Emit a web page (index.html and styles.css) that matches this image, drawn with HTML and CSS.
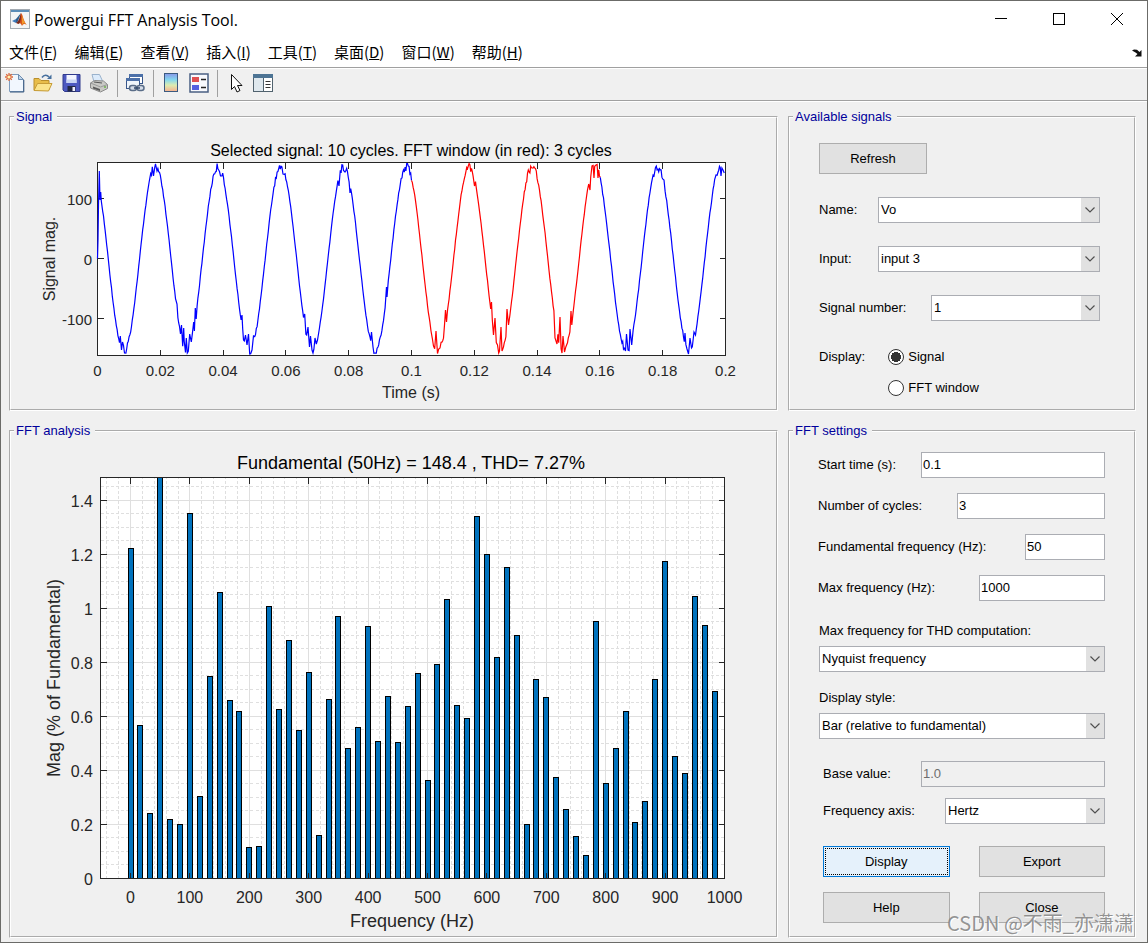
FILE: index.html
```html
<!DOCTYPE html>
<html lang="zh-CN">
<head>
<meta charset="utf-8">
<title>Powergui FFT Analysis Tool.</title>
<link rel="stylesheet" href="styles.css">
</head>
<body>
<div class="window">
  <header class="titlebar">
    <svg class="app-icon" width="20" height="20" viewBox="0 0 20 20" aria-hidden="true">
      <rect x=".5" y=".5" width="19" height="19" fill="#f4f5f6" stroke="#a3aab1"/>
      <path d="M1 1h18v2H1z" fill="#5b8db8"/>
      <path d="M2 12l4-2 2 2-2 2z" fill="#3e79b8"/>
      <path d="M6 10l5-6-3 8-2 2z" fill="#2c5d8f"/>
      <path d="M11 4c2 1 2 8 6 12-3-2-4-1-5 1-1-3-3-4-5-2 2-2 3-8 4-11z" fill="#d9541a"/>
      <path d="M11 4c-1 4-2 8-5 10l3 1c2-3 2-6 2-11z" fill="#7a2a1c"/>
      <path d="M12 6c1 4 2 7 4 9-2-1-3-1-4 1z" fill="#f09b2c"/>
    </svg>
    <h1 class="title">Powergui FFT Analysis Tool.</h1>
    <div class="window-buttons">
      <button type="button" class="window-button" aria-label="Minimize"><svg width="12" height="12" viewBox="0 0 12 12"><path d="M0 5.500h12" stroke="#000"/></svg></button>
      <button type="button" class="window-button" aria-label="Maximize"><svg width="12" height="12" viewBox="0 0 12 12"><rect x=".5" y=".5" width="11" height="11" fill="none" stroke="#000"/></svg></button>
      <button type="button" class="window-button" aria-label="Close window"><svg width="12" height="12" viewBox="0 0 12 12"><path d="M0 0l12 12M12 0L0 12" stroke="#000"/></svg></button>
    </div>
  </header>

  <nav class="menubar">
    <button type="button" class="menu">文件(<u>F</u>)</button>
    <button type="button" class="menu">编辑(<u>E</u>)</button>
    <button type="button" class="menu">查看(<u>V</u>)</button>
    <button type="button" class="menu">插入(<u>I</u>)</button>
    <button type="button" class="menu">工具(<u>T</u>)</button>
    <button type="button" class="menu">桌面(<u>D</u>)</button>
    <button type="button" class="menu">窗口(<u>W</u>)</button>
    <button type="button" class="menu">帮助(<u>H</u>)</button>
    <button type="button" class="dock" aria-label="Dock figure"><svg width="10" height="8" viewBox="0 0 10 8"><path d="M0 1.500L2 .5l3 .3 2.500 2.200L9.500 1v6.500H3L5.500 5 3.500 3.500z" fill="#111"/></svg></button>
  </nav>

  <div class="toolbar">
    <button type="button" class="tool" aria-label="New figure"><svg width="20" height="20" viewBox="0 0 20 20"><path d="M4.500 1.500h9l5 5v12h-14z" fill="#f1f7fe" stroke="#7f9cbd"/><path d="M13.500 1.500v5h5z" fill="#c3d6ea" stroke="#6d8db1"/><path d="M18.800 7v12H5" fill="none" stroke="#36567c"/><path d="M4 0v8M0 4h8M1.200 1.200l5.600 5.600M6.800 1.200L1.200 6.800" stroke="#dd6a3c" stroke-width="1.300"/><circle cx="4" cy="4" r="1.600" fill="#fff2b0"/></svg></button>
    <button type="button" class="tool" aria-label="Open file"><svg width="20" height="20" viewBox="0 0 20 20"><path d="M1 17V5.500h5l2 2h8V17z" fill="#e8bd49" stroke="#b98e2c"/><path d="M1 17.500l3.500-7h14.500l-3.500 7.500z" fill="#fbe48b" stroke="#c79c36"/><path d="M9 4.500c2-3 5-3 7-.5" fill="none" stroke="#47709e" stroke-width="1.500"/><path d="M18.500 1.500v4.500h-4.500z" fill="#47709e"/></svg></button>
    <button type="button" class="tool" aria-label="Save figure"><svg width="20" height="20" viewBox="0 0 20 20"><path d="M2 1.500h17v17H3.500L2 17z" fill="#4c58c0" stroke="#303a8c"/><path d="M5.500 2h10v8h-10z" fill="#f3f5ff"/><path d="M5.500 6.500h10V10h-10z" fill="#c9d5f3"/><path d="M6.500 13h8v5.500h-8z" fill="#222845"/><path d="M11.500 14h2.500v4h-2.500z" fill="#eef"/></svg></button>
    <button type="button" class="tool" aria-label="Print figure"><svg width="20" height="20" viewBox="0 0 20 20"><path d="M5 9L3 1.500h7.500L14 9z" fill="#dcebfb" stroke="#9ab2cc"/><path d="M1.500 10l4-2.500 9 .5 4 3.500v4l-7 3.500-10-4z" fill="#c9c9c5" stroke="#8a8a8a"/><path d="M1.500 10l10 4 7-2.500" fill="none" stroke="#999"/><path d="M4 13.500l7 2.500v2l-7-2.500z" fill="#5b5b5b"/><path d="M5 9l8 1" stroke="#555"/><circle cx="16" cy="14" r="1" fill="#6ab04a"/></svg></button>
    <span class="separator"></span>
    <button type="button" class="tool" aria-label="Link plot"><svg width="20" height="20" viewBox="0 0 20 20"><rect x="4.500" y="1.500" width="13" height="9" fill="#fff" stroke="#38568a"/><path d="M4 1h14v3H4z" fill="#4c70a8"/><rect x="1.500" y="5.500" width="13" height="10" fill="#eff5fb" stroke="#38568a"/><path d="M1 5h14v3H1z" fill="#4c70a8"/><rect x="4.500" y="12.500" width="7" height="5" rx="2.500" fill="#d4dce8" stroke="#5a6d88" stroke-width="1.500"/><rect x="12" y="12.500" width="7" height="5" rx="2.500" fill="#d4dce8" stroke="#5a6d88" stroke-width="1.500"/><path d="M9 15h6" stroke="#2f4668" stroke-width="1.500"/></svg></button>
    <span class="separator"></span>
    <button type="button" class="tool" aria-label="Insert colorbar"><svg width="20" height="20" viewBox="0 0 20 20"><defs><linearGradient id="bar-colors" x2="0" y2="1"><stop offset="0" stop-color="#8797e8"/><stop offset=".35" stop-color="#84d8ef"/><stop offset=".65" stop-color="#ddecb0"/><stop offset="1" stop-color="#f6b08f"/></linearGradient></defs><rect x="3.500" y=".5" width="13" height="18" fill="url(#bar-colors)" stroke="#3c5a80"/></svg></button>
    <button type="button" class="tool" aria-label="Insert legend"><svg width="20" height="20" viewBox="0 0 20 20"><rect x="1" y="1" width="18" height="18" fill="#f8f9fd" stroke="#4a5f82" stroke-width="1.500"/><path d="M3 4h7v5H3z" fill="#e04f50"/><path d="M3 12h7v5H3z" fill="#5560e0"/><path d="M12 6.500h5M12 14.500h5" stroke="#222" stroke-width="1.300"/></svg></button>
    <span class="separator"></span>
    <button type="button" class="tool" aria-label="Edit plot"><svg width="20" height="20" viewBox="0 0 20 20"><path d="M6.500 1.500v15l3-3 2.500 5.500 3-1.500-2.500-5h4.500z" fill="#fff" stroke="#111"/></svg></button>
    <button type="button" class="tool" aria-label="Open property inspector"><svg width="20" height="20" viewBox="0 0 20 20"><rect x=".5" y="1.500" width="19" height="17" fill="#dfe8ee" stroke="#51626e"/><path d="M0 1h20v4H0z" fill="#4d7494"/><path d="M10.500 5v13" stroke="#51626e"/><path d="M11 5h8v13h-8z" fill="#fff"/><path d="M12.500 8.500h5M12.500 11.500h5M12.500 14.500h5" stroke="#333"/></svg></button>
  </div>

  <main class="panels">
    <fieldset class="panel">
      <legend>Signal</legend>
      <svg class="chart signal-chart" id="signal-chart" viewBox="11 124 765 285" role="img" aria-label="Signal plot"></svg>
    </fieldset>

    <fieldset class="panel">
      <legend>Available signals</legend>
      <div class="form signals-form">
        <button type="button" class="button refresh">Refresh</button>
        <div class="row">
          <label for="name">Name:</label>
          <select id="name" class="control w-222"><option>Vo</option></select>
        </div>
        <div class="row">
          <label for="input">Input:</label>
          <select id="input" class="control w-222"><option>input 3</option></select>
        </div>
        <div class="row">
          <label for="number">Signal number:</label>
          <select id="number" class="control w-169"><option>1</option></select>
        </div>
        <div class="radio-row">
          <span>Display:</span>
          <div class="radios">
            <label class="radio"><input type="radio" name="display" checked>Signal</label>
            <label class="radio"><input type="radio" name="display">FFT window</label>
          </div>
        </div>
      </div>
    </fieldset>

    <fieldset class="panel">
      <legend>FFT analysis</legend>
      <svg class="chart fft-chart" id="fft-chart" viewBox="11 438 765 498" role="img" aria-label="FFT bar chart"></svg>
    </fieldset>

    <fieldset class="panel">
      <legend>FFT settings</legend>
      <div class="form settings-form">
        <div class="row">
          <label for="start">Start time (s):</label>
          <input id="start" type="text" class="control w-184" value="0.1">
        </div>
        <div class="row">
          <label for="cycles">Number of cycles:</label>
          <input id="cycles" type="text" class="control w-148" value="3">
        </div>
        <div class="row">
          <label for="fundamental">Fundamental frequency (Hz):</label>
          <input id="fundamental" type="text" class="control w-80" value="50">
        </div>
        <div class="row">
          <label for="max">Max frequency (Hz):</label>
          <input id="max" type="text" class="control w-126" value="1000">
        </div>
        <div class="stack">
          <label for="thd">Max frequency for THD computation:</label>
          <select id="thd" class="control"><option>Nyquist frequency</option></select>
        </div>
        <div class="stack">
          <label for="style">Display style:</label>
          <select id="style" class="control"><option>Bar (relative to fundamental)</option></select>
        </div>
        <div class="axis-group">
          <div class="row">
            <label for="base">Base value:</label>
            <input id="base" type="text" class="control w-184" value="1.0" disabled>
          </div>
          <div class="row">
            <label for="axis">Frequency axis:</label>
            <select id="axis" class="control w-160"><option>Hertz</option></select>
          </div>
        </div>
        <div class="actions">
          <button type="button" class="button default">Display</button>
          <button type="button" class="button">Export</button>
          <button type="button" class="button">Help</button>
          <button type="button" class="button">Close</button>
        </div>
      </div>
    </fieldset>
  </main>
  <div class="watermark">CSDN @不雨_亦潇潇</div>
</div>
<script src="charts.js"></script>
</body>
</html>
```

FILE: styles.css
```css
* {
  box-sizing: border-box;
}

body {
  margin: 0;
  background: #f0f0f0;
  color: #000;
  font: 13px/16px "Liberation Sans", Arial, sans-serif;
}

button,
input,
select {
  margin: 0;
  font: inherit;
  color: inherit;
}

.window {
  position: relative;
  display: flex;
  flex-direction: column;
  min-height: 100vh;
  border: 1px solid #6b6b68;
}

.titlebar {
  display: flex;
  align-items: center;
  height: 37px;
  padding-left: 9px;
  background: #fff;
}

.app-icon {
  margin-bottom: 2px;
}

.title {
  margin: 0 0 0 4px;
  font: 400 16px/20px "Open Sans", "Noto Sans CJK SC", sans-serif;
}

.window-buttons {
  display: flex;
  align-self: stretch;
  margin-left: auto;
}

.window-button {
  display: grid;
  place-items: center;
  width: 58px;
  padding: 0 2px 2px 0;
  border: 0;
  background: none;
}

.menubar {
  display: flex;
  align-items: center;
  gap: 17px;
  height: 29px;
  padding: 0 5px 0 8px;
  background: #fff;
}

.menu {
  padding: 0 0 2px;
  border: 0;
  background: none;
  font: 15px/22px "Noto Sans CJK SC", sans-serif;
  white-space: nowrap;
}

.dock {
  display: flex;
  margin-left: auto;
  padding: 0;
  border: 0;
  background: none;
}

.toolbar {
  display: flex;
  align-items: center;
  gap: 7px;
  height: 34px;
  padding: 0 0 2px 4px;
  border-top: 1px solid #a0a0a0;
  border-bottom: 1px solid #a0a0a0;
  box-shadow: inset 0 1px #fff, 0 1px #fff;
}

.tool {
  display: flex;
  width: 21px;
  padding: 0;
  border: 0;
  background: none;
}

.separator {
  width: 1px;
  height: 27px;
  background: #a0a0a0;
}

.panels {
  flex: 1;
  display: grid;
  grid-template-columns: 769fr 348fr;
  grid-template-rows: auto 1fr;
  gap: 12px 10px;
  padding: 8px 11px 4px 8px;
}

.panel {
  min-width: 0;
  margin: 0;
  padding: 0;
  border: 2px groove #fff;
}

.panel legend {
  margin-left: 3px;
  padding: 0 5px 0 2px;
  color: #00009c;
  line-height: 15px;
}

.chart {
  display: block;
  width: 100%;
  font-family: "Liberation Sans", Arial, sans-serif;
  fill: #262626;
}

.signal-chart {
  font-size: 15px;
}

.fft-chart {
  font-size: 16px;
}

.signal-chart .label {
  font-size: 16px;
}

.fft-chart .label {
  font-size: 18px;
}

.chart .title-text {
  fill: #000;
}

.plot-area {
  fill: #fff;
}

.frame {
  fill: none;
  stroke: #262626;
  shape-rendering: crispEdges;
}

.major,
.minor {
  stroke: #dfdfdf;
  shape-rendering: crispEdges;
}

.minor {
  stroke-dasharray: 3 2;
}

.bar {
  fill: #0072bd;
  stroke: #000;
  shape-rendering: crispEdges;
}

.wave {
  fill: none;
  stroke: #00f;
  stroke-width: 1.2;
}

.wave.selected {
  stroke: #f00;
}

.form {
  display: flex;
  flex-direction: column;
}

.signals-form {
  gap: 23px;
  padding: 19px 34px 0 29px;
}

.settings-form {
  gap: 15px;
  padding: 14px 29px 13px 28px;
}

.row {
  display: flex;
  align-items: center;
  justify-content: space-between;
}

.stack {
  display: flex;
  flex-direction: column;
  gap: 7px;
  padding: 7px 0 0 1px;
}

.stack + .stack {
  padding-top: 3px;
}

.axis-group {
  display: flex;
  flex-direction: column;
  gap: 11px;
  padding: 7px 0 7px 5px;
}

.control {
  height: 26px;
  padding: 0 2px;
  border: 1px solid #abadb3;
  border-radius: 0;
  background-color: #fff;
}

input.control {
  padding: 0 1px 2px;
}

input.control:disabled {
  background-color: #f0f0f0;
  color: #6d6d6d;
}

select.control {
  appearance: none;
  background-image:
    url("data:image/svg+xml,%3Csvg xmlns='http://www.w3.org/2000/svg' width='10' height='6'%3E%3Cpath d='M.5 .5L5 5L9.500 .5' fill='none' stroke='%23505050' stroke-width='1.200'/%3E%3C/svg%3E"),
    linear-gradient(#e1e1e1, #e1e1e1);
  background-position: right 4px center, right center;
  background-size: 10px 6px, 18px 100%;
  background-repeat: no-repeat;
}

.w-80 { width: 80px; }
.w-126 { width: 126px; }
.w-148 { width: 148px; }
.w-160 { width: 160px; }
.w-169 { width: 169px; }
.w-184 { width: 184px; }
.w-222 { width: 222px; }

.button {
  height: 31px;
  padding: 0;
  border: 1px solid #adadad;
  background: #e1e1e1;
}

.button.refresh {
  width: 108px;
}

.button.default {
  border-color: #0078d7;
  background: #e5f1fb;
  outline: 1px dotted #000;
  outline-offset: -3px;
}

.actions {
  display: grid;
  grid-template-columns: 1fr 1fr;
  gap: 15px 29px;
  padding-left: 5px;
}

.radio-row {
  display: flex;
  gap: 23px;
  padding-top: 5px;
}

.radios {
  display: flex;
  flex-direction: column;
  gap: 15px;
}

.radio {
  display: flex;
  align-items: center;
  gap: 4px;
}

.radio input {
  appearance: none;
  width: 16px;
  height: 16px;
  border: 1px solid #333;
  border-radius: 50%;
  background: #fff;
}

.radio input:checked {
  background: radial-gradient(circle, #333 0 5px, #fff 5px);
}

.watermark {
  position: absolute;
  right: 13px;
  bottom: 5px;
  color: rgba(130, 130, 130, 0.85);
  font: 20px/28px "Noto Sans CJK SC", sans-serif;
  text-shadow: 1px 1px #fff;
  white-space: nowrap;
  pointer-events: none;
}
```

FILE: charts.js
```js
const SVG = "http://www.w3.org/2000/svg";

function add(parent, name, attrs, text) {
  const el = document.createElementNS(SVG, name);
  for (const key in attrs) el.setAttribute(key, attrs[key]);
  if (text !== undefined) el.textContent = text;
  parent.appendChild(el);
  return el;
}

const snap = v => Math.floor(v) + 0.5;

// Axes box with inward ticks on all four sides.
function frame(svg, box, xs, ys, len) {
  let d = `M${box.l} ${box.t}H${box.r}V${box.b}H${box.l}Z`;
  xs.forEach(x => { d += `M${x} ${box.b}v${-len}M${x} ${box.t}v${len}`; });
  ys.forEach(y => { d += `M${box.l} ${y}h${len}M${box.r} ${y}h${-len}`; });
  add(svg, "path", { class: "frame", d });
}

function drawSignal() {
  const svg = document.getElementById("signal-chart");
  const box = { l: 97.5, t: 162.5, r: 725.5, b: 355.5 };
  const xOf = t => box.l + t * 3140;
  add(svg, "rect", { class: "plot-area", x: box.l, y: box.t, width: box.r - box.l, height: box.b - box.t });

  const xs = [];
  for (let i = 0; i <= 10; i++) {
    xs.push(snap(xOf(i * 0.02)));
    add(svg, "text", { x: xOf(i * 0.02), y: 376, "text-anchor": "middle" }, String(i * 2 / 100));
  }
  const ys = [198.5, 258.5, 318.5];
  [100, 0, -100].forEach((v, i) => {
    add(svg, "text", { x: 92, y: ys[i] + 6, "text-anchor": "end" }, v);
  });
  frame(svg, box, xs, ys, 6);

  // Switching spikes, as [x, y] samples.
  const spikes = [
    [98, 240], [98.5, 205], [99.3, 171], [100, 200], [100.7, 192], [101.3, 201],
    [120.3, 336], [121.5, 350], [122.5, 342], [124.5, 353],
    [153.5, 176], [157, 171],
    [177, 304], [178.7, 323], [180.5, 334], [181.5, 325], [183.7, 328], [184.2, 341], [185.5, 352.5], [186.3, 338], [187.3, 353], [189.7, 334], [191.3, 342], [193.7, 322], [194.4, 331], [195.3, 308], [196.2, 319],
    [220.5, 176], [242, 315], [243.5, 340], [245.5, 335], [247, 345], [248.5, 334], [249.7, 354], [252, 350], [253.5, 336],
    [283, 174], [304.7, 314], [306.7, 335], [308, 327], [309.5, 347], [310.5, 336], [312, 350], [313, 353], [315, 338], [317.5, 340], [318.5, 334],
    [339, 186], [345, 172], [350, 193],
    [370, 337], [371.5, 332], [373, 347], [375, 353], [378, 347],
    [386.5, 287], [387, 297], [402, 178],
    [431, 331], [433.5, 346], [436, 331], [437.5, 353.5], [440, 348],
    [444.5, 325], [445.5, 310], [446.5, 322], [474.5, 186],
    [491.5, 302], [493.5, 335], [495, 318], [497.5, 345], [499.5, 351], [501, 327], [502, 351],
    [507, 309], [508.5, 325], [533, 168],
    [555, 338], [557, 344], [560, 317], [562, 353], [563, 336], [564.5, 352],
    [571, 311], [571.8, 325], [588.7, 184], [590, 190], [592, 166], [594, 178], [596, 165], [598, 178],
    [625.5, 351], [626.5, 334], [628, 350], [630, 329], [631.7, 345],
    [654, 176], [664, 180],
    [685, 333], [687, 349], [688.5, 354], [690, 338], [694, 332], [695.5, 335],
    [716, 175], [721, 176], [723, 170]
  ];

  const points = [[97.5, 258.5], ...spikes];
  for (let x = 101.9, i = 0; x <= 725; x += 0.8, i++) {
    if (spikes.some(s => Math.abs(s[0] - x) < 0.7)) continue;
    const phase = Math.cos(2 * Math.PI * (x - 155.3) / 62.8);
    const jitter = Math.sin(i * 12.9898) * 43758.5453;
    const noise = (jitter - Math.floor(jitter) - 0.5) * (2 + 8 * Math.pow(Math.abs(phase), 6));
    const y = 258.5 - 92 * phase + noise;
    points.push([x, Math.min(354, Math.max(163.5, y))]);
  }
  points.sort((a, b) => a[0] - b[0]);

  const a = xOf(0.1), b = xOf(0.16);
  [[0, a + 0.8, ""], [a, b + 0.8, " selected"], [b, 999, ""]].forEach(([from, to, cls]) => {
    const part = points.filter(p => p[0] >= from && p[0] <= to);
    add(svg, "polyline", { class: "wave" + cls, points: part.map(p => p.join(",")).join(" ") });
  });

  add(svg, "text", { class: "label title-text", x: 411, y: 156, "text-anchor": "middle" }, "Selected signal: 10 cycles. FFT window (in red): 3 cycles");
  add(svg, "text", { class: "label", x: 411, y: 398, "text-anchor": "middle" }, "Time (s)");
  add(svg, "text", { class: "label", transform: "translate(55 259) rotate(-90)", "text-anchor": "middle" }, "Signal mag.");
}

function drawSpectrum() {
  const svg = document.getElementById("fft-chart");
  const box = { l: 100.5, t: 477.5, r: 724.5, b: 878.5 };
  const xOf = f => 130.5 + f * 0.594;
  const yOf = v => box.b - v * 270.1;
  add(svg, "rect", { class: "plot-area", x: box.l, y: box.t, width: box.r - box.l, height: box.b - box.t });

  for (let f = -40; f < 1000; f += 20) {
    const x = snap(xOf(f));
    add(svg, "path", { class: f % 100 ? "minor" : "major", d: `M${x} ${box.b}V${box.t}` });
  }
  for (let k = 1; k < 30; k++) {
    const y = snap(yOf(k * 0.05));
    if (y > box.t) add(svg, "path", { class: k % 4 ? "minor" : "major", d: `M${box.l} ${y}H${box.r}` });
  }

  // Magnitude in % of the fundamental, one value every 16.67 Hz.
  const mags = [
    1.222, 0.567, 0.241, 1.485, 0.219, 0.199, 1.351, 0.304, 0.748, 1.059,
    0.659, 0.617, 0.115, 0.119, 1.007, 0.626, 0.881, 0.548, 0.763, 0.159,
    0.663, 0.970, 0.482, 0.559, 0.933, 0.507, 0.674, 0.504, 0.637, 0.760,
    0.363, 0.793, 1.033, 0.641, 0.593, 1.341, 1.200, 0.819, 1.152, 0.900,
    0.200, 0.737, 0.671, 0.374, 0.256, 0.156, 0.085, 0.952, 0.352, 0.482,
    0.619, 0.208, 0.285, 0.737, 1.174, 0.452, 0.389, 1.044, 0.937, 0.693
  ];
  mags.forEach((m, i) => {
    const x = snap(xOf(i * 50 / 3) - 2.5);
    const y = snap(yOf(m));
    add(svg, "rect", { class: "bar", x, y, width: 5, height: box.b - y });
  });

  const xs = [];
  for (let f = 0; f <= 1000; f += 100) {
    xs.push(snap(xOf(f)));
    add(svg, "text", { x: xOf(f), y: 903, "text-anchor": "middle" }, f);
  }
  const ys = [];
  for (let k = 0; k <= 7; k++) {
    const y = snap(yOf(k * 0.2));
    ys.push(y);
    add(svg, "text", { x: 93, y: y + 6, "text-anchor": "end" }, String(k * 2 / 10));
  }
  frame(svg, box, xs, ys, 6);

  add(svg, "text", { class: "label title-text", x: 411, y: 469, "text-anchor": "middle" }, "Fundamental (50Hz) = 148.4 , THD= 7.27%");
  add(svg, "text", { class: "label", x: 412, y: 927, "text-anchor": "middle" }, "Frequency (Hz)");
  add(svg, "text", { class: "label", transform: "translate(60 678) rotate(-90)", "text-anchor": "middle" }, "Mag (% of Fundamental)");
}

drawSignal();
drawSpectrum();
```
